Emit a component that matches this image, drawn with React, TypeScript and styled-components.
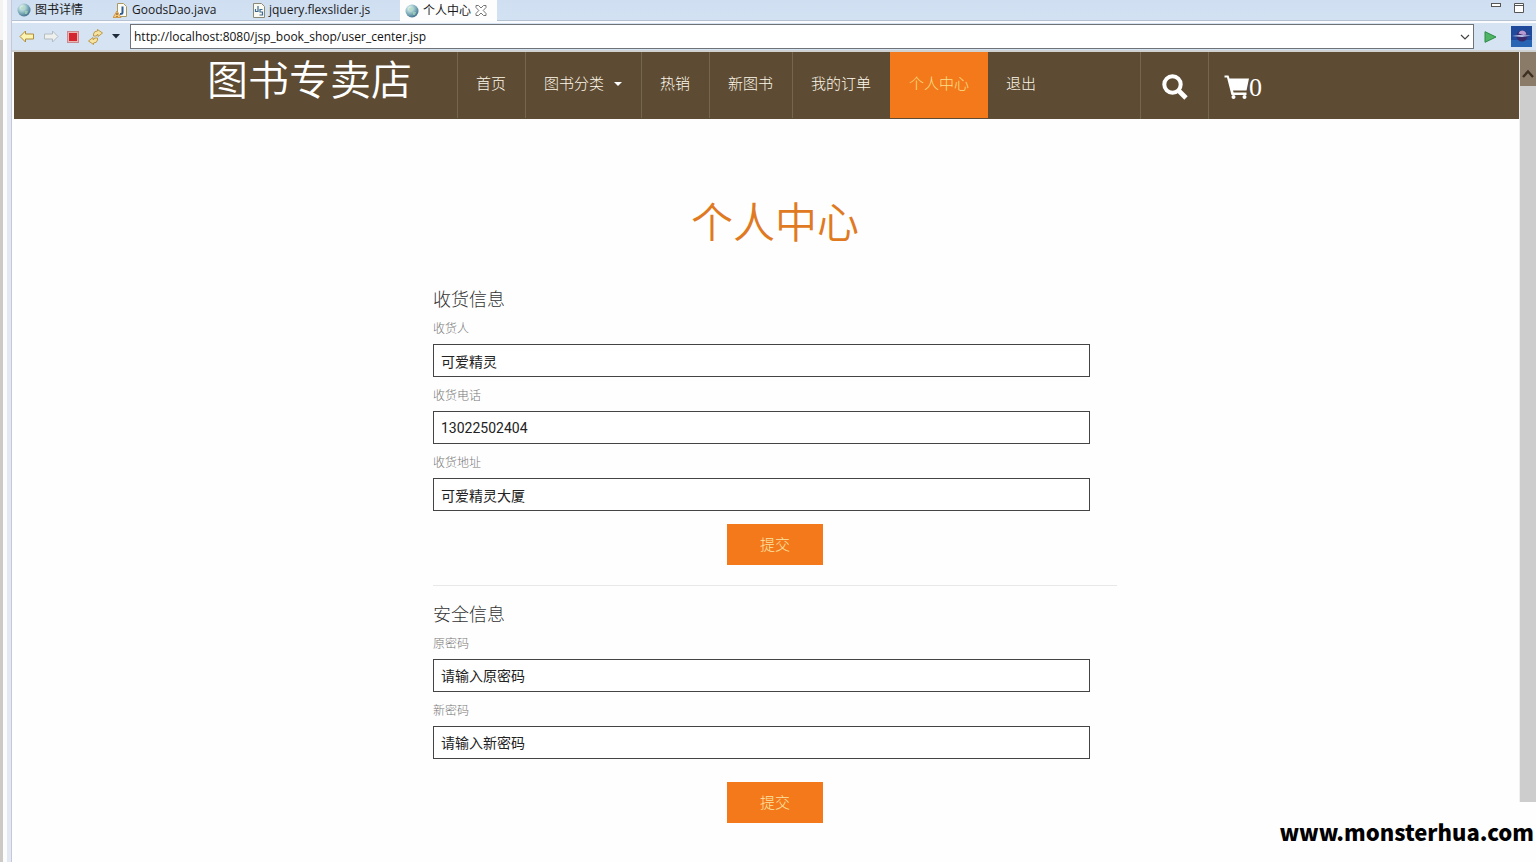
import React from "react";
import styled, { createGlobalStyle } from "styled-components";

const sans = `"Noto Sans", "Noto Sans CJK SC", sans-serif`;
const serif = `"Liberation Serif", "Noto Sans CJK SC", serif`;
const orange = "#f4791b";
const brown = "#5d4b33";

const Global = createGlobalStyle`
  * { box-sizing: border-box; }
  body { margin: 0; background: #fefefe; font-family: ${sans}; color: #111; }
  h1, h2 { margin: 0; font-weight: 300; }
`;

const Shell = styled.div`
  display: flex;
  min-height: 100vh;
`;

const Gutter = styled.div`
  display: flex;
  flex: none;
  width: 12px;
  background: #e3e8f1;
  border-right: 1px solid #c3c9da;
`;

const GutterTrack = styled.div`
  display: flex;
  flex-direction: column;
  width: 7px;
  border-right: 4px solid #fbfcfd;
  background: #cdcac6;

  &::before {
    content: "";
    height: 40px;
    background: #f4f3f2;
  }
`;

const Workbench = styled.div`
  flex: 1;
  min-width: 0;
  display: flex;
  flex-direction: column;
`;

const TabStrip = styled.div`
  display: flex;
  height: 21px;
  background: linear-gradient(#cfdef0, #d3e2f3);
  border-bottom: 1px solid #b4c2d3;
`;

const Tab = styled.button<{ $width: number; $active?: boolean }>`
  display: flex;
  align-items: center;
  gap: 4px;
  width: ${(p) => p.$width}px;
  height: ${(p) => (p.$active ? 21 : 20)}px;
  padding: 0 5px;
  border: 0;
  background: ${(p) => (p.$active ? "#fdfdfe" : "transparent")};
  font: 12px/18px "Open Sans", "Noto Sans CJK SC", sans-serif;
  color: #1a1a1a;
  white-space: nowrap;
  svg { flex: none; }
`;

const WindowButtons = styled.div`
  display: flex;
  gap: 13px;
  margin-left: auto;
  padding: 3px 12px 0 0;
`;

const IconButton = styled.button`
  display: flex;
  padding: 0;
  border: 0;
  background: none;
`;

const Toolbar = styled.form`
  display: flex;
  align-items: center;
  height: 31px;
  padding: 0 4px 0 7px;
  border-top: 2px solid #fafbfc;
  border-bottom: 2px solid #d0d2d2;
  background: #d5e3f3;
`;

const ToolGroup = styled.div`
  display: flex;
  align-items: center;
  gap: 8px;
  width: 111px;
`;

const AddressBox = styled.div`
  display: flex;
  align-items: center;
  flex: 1;
  height: 25px;
  padding-right: 3px;
  border: 1px solid #6f7377;
  background: #fff;
`;

const Address = styled.input`
  flex: 1;
  min-width: 0;
  height: 22px;
  padding: 0 3px;
  border: 0;
  outline: 0;
  background: none;
  font: 12px/18px "Open Sans", sans-serif;
  color: #111;
`;

const ToolEnd = styled.div`
  display: flex;
  align-items: center;
  gap: 14px;
  padding-left: 10px;
`;

const Viewport = styled.div`
  flex: 1;
  display: flex;
  padding-left: 2px;
`;

const Page = styled.div`
  flex: 1;
  min-width: 0;
`;

const Scrollbar = styled.div`
  flex: none;
  width: 17px;
  margin-bottom: 60px;
  background: #cdcdcd;
  border-left: 1px solid #f0f0f0;
`;

const ScrollUp = styled.button`
  display: flex;
  align-items: center;
  justify-content: center;
  width: 100%;
  height: 34px;
  padding: 8px 0 0;
  border: 0;
  background: #8a7b69;
`;

const NavBar = styled.header`
  background: ${brown};
`;

const NavInner = styled.div`
  display: flex;
  height: 67px;
  max-width: 1119px;
  margin: 0 auto;
`;

const Brand = styled.a`
  width: 250px;
  font: 350 41px/58px ${serif};
  color: #fff;
  text-decoration: none;
  white-space: nowrap;
`;

const Menu = styled.nav`
  display: flex;
  flex: 1;
`;

const MenuLink = styled.a<{ $active?: boolean; $plain?: boolean }>`
  display: flex;
  align-items: center;
  gap: 10px;
  height: 66px;
  padding: 0 19px 6px 18px;
  border-left: ${(p) => (p.$plain ? 0 : 1)}px solid ${(p) => (p.$active ? orange : "#76664f")};
  background: ${(p) => (p.$active ? orange : "transparent")};
  color: ${(p) => (p.$active ? "#f8e08c" : "#fdf8ea")};
  font-size: 15px;
  font-weight: 300;
  text-decoration: none;
  white-space: nowrap;
`;

const Caret = styled.span`
  border: 4px solid transparent;
  border-top-color: #fff;
  border-bottom: 0;
  margin-top: 4px;
`;

const NavTool = styled.a<{ $width: number }>`
  display: flex;
  align-items: center;
  width: ${(p) => p.$width}px;
  padding: 4px 0 0 15px;
  border-left: 1px solid #76664f;
  color: #fff;
  font: 26px/30px ${serif};
  text-decoration: none;
`;

const Main = styled.main`
  padding: 75px 0 38px 17px;
`;

const Column = styled.div`
  max-width: 684px;
  margin: 0 auto;
`;

const Title = styled.h1`
  margin-bottom: 34px;
  font: 350 42px/60px ${serif};
  color: #e07a22;
  text-align: center;
`;

const Section = styled.form`
  display: flex;
  flex-direction: column;

  & + & {
    margin-top: 20px;
    padding-top: 17px;
    border-top: 1px solid #e8e8e8;
  }
`;

const SectionTitle = styled.h2`
  margin-bottom: -2px;
  font: 300 18px/24px ${serif};
  color: #333;
`;

const Field = styled.div`
  display: flex;
  flex-direction: column;
  width: 96%;
`;

const Label = styled.label`
  padding-top: 4px;
  font-size: 12px;
  font-weight: 300;
  line-height: 30px;
  color: #777;
`;

const TextInput = styled.input`
  height: 33px;
  padding: 0 7px;
  border: 1px solid #444;
  border-radius: 0;
  background: #fff;
  font: 14px/20px Roboto, "Noto Sans CJK SC", sans-serif;
  color: #222;
  &::placeholder { color: #222; opacity: 1; }
`;

const Submit = styled.button<{ $gap: number }>`
  align-self: center;
  width: 96px;
  height: 41px;
  margin-top: ${(p) => p.$gap}px;
  padding: 0 0 2px;
  border: 0;
  background: ${orange};
  color: #fbe6a6;
  font: 300 15px/20px ${sans};
`;

const Watermark = styled.div`
  position: fixed;
  right: 0;
  bottom: 0;
  height: 60px;
  padding: 0 2px;
  background: #fefefe;
  font: 900 22px/58px "Noto Sans CJK SC", sans-serif;
  color: #000;
`;

const Globe = () => (
  <svg width="14" height="14" viewBox="0 0 14 14">
    <defs>
      <radialGradient id="globe" cx=".35" cy=".3" r=".75">
        <stop offset="0" stopColor="#f2fafa" />
        <stop offset=".5" stopColor="#8fbcc4" />
        <stop offset="1" stopColor="#3f6d8c" />
      </radialGradient>
    </defs>
    <circle cx="7" cy="7" r="6.500" fill="url(#globe)" />
    <path d="M4 4l3-1 1 2-2 2-2-1zM8 8l3 0-1 3-2 0z" fill="#a5d9b4" opacity=".7" />
  </svg>
);

const JavaFile = () => (
  <svg width="15" height="15" viewBox="0 0 15 15">
    <path d="M4.500.5h6l3 3v10h-9z" fill="#fbfbf4" stroke="#a99a63" />
    <path d="M9.500 3.500v6q0 1.500-2.500 1.500" fill="none" stroke="#2d5c94" strokeWidth="2" />
    <path d="M4 8l4 6.500H0z" fill="#f3cb78" stroke="#c98a3c" strokeWidth=".8" />
    <path d="M4 10v2M4 13v1" stroke="#7a3d12" />
  </svg>
);

const ScriptFile = () => (
  <svg width="12" height="15" viewBox="0 0 12 15">
    <path d="M.5.5h8l3 3v11H.5z" fill="#fafaf3" stroke="#8b8a76" />
    <path d="M5 3v5.500H2.500V6M9.500 6.500H7V9h2.500v3H6.500" fill="none" stroke="#3c6a92" strokeWidth="1.200" />
  </svg>
);

const CloseMark = () => (
  <svg width="12" height="11" viewBox="0 0 12 11">
    <path d="M1 .5h2.500L6 3 8.500.5H11v2L8.200 5.500 11 8.500v2H8.500L6 8l-2.500 2.500H1v-2l2.800-3L1 2.500z" fill="#fff" stroke="#666" strokeWidth=".9" />
  </svg>
);

const Arrow = ({ forward }: { forward?: boolean }) => (
  <svg width="16" height="13" viewBox="0 0 16 13">
    <path
      d={forward ? "M15 6.500L9.500 1v3H1.500v5h8v3z" : "M1 6.500L6.500 1v3h8v5h-8v3z"}
      fill={forward ? "#eef0ee" : "#fdf3b0"}
      stroke={forward ? "#b4bcc4" : "#b08e3c"}
    />
  </svg>
);

const Stop = () => (
  <svg width="12" height="12" viewBox="0 0 12 12">
    <rect x=".5" y=".5" width="11" height="11" fill="#e9b6b4" stroke="#c98a90" />
    <rect x="2" y="2" width="8" height="8" fill="#d3262f" />
  </svg>
);

const Refresh = () => (
  <svg width="17" height="16" viewBox="0 0 17 16">
    <path d="M6.500 7V5Q7 2 10.500 2V.5L15.500 4 11 7.500V5.500Q9.500 5.500 9.500 7z" fill="#f7e3a0" stroke="#b8923e" strokeWidth=".9" />
    <path d="M10.500 9v2Q10 14 6.500 14v1.500L1.500 12 6 8.500v2Q7.500 10.500 7.500 9z" fill="#f7e3a0" stroke="#b8923e" strokeWidth=".9" />
  </svg>
);

const Search = () => (
  <svg width="36" height="28" viewBox="0 0 36 28">
    <circle cx="16.500" cy="10.500" r="8.200" fill="none" stroke="#fff" strokeWidth="4" />
    <path d="M22.500 16.500l7.500 7.500" stroke="#fff" strokeWidth="4.800" />
  </svg>
);

const Cart = () => (
  <svg width="25" height="28" viewBox="0 0 25 28">
    <path d="M.5 1.500h4l1 3H25l-2.500 12H9l.6 2H22.500v2.500H7.500L3 3.500H.5z" fill="#fff" />
    <circle cx="9.500" cy="23" r="2" fill="#fff" />
    <circle cx="20.500" cy="23" r="2" fill="#fff" />
  </svg>
);

const shipping = [
  { id: "receiver", label: "收货人", value: "可爱精灵" },
  { id: "phone", label: "收货电话", value: "13022502404" },
  { id: "address", label: "收货地址", value: "可爱精灵大厦" },
];

const passwords = [
  { id: "old-password", label: "原密码", hint: "请输入原密码" },
  { id: "new-password", label: "新密码", hint: "请输入新密码" },
];

export default function App() {
  return (
    <>
      <Global />
      <Shell>
        <Gutter><GutterTrack /></Gutter>
        <Workbench>
          <TabStrip>
            <Tab $width={96}><Globe />图书详情</Tab>
            <Tab $width={140}><JavaFile />GoodsDao.java</Tab>
            <Tab $width={152}><ScriptFile />jquery.flexslider.js</Tab>
            <Tab $width={97} $active><Globe />个人中心<CloseMark /></Tab>
            <WindowButtons>
              <IconButton aria-label="最小化">
                <svg width="10" height="14"><rect x=".5" y=".5" width="9" height="3" fill="#fff" stroke="#555" /></svg>
              </IconButton>
              <IconButton aria-label="最大化">
                <svg width="10" height="14"><path d="M.5.5h9v9h-9zM.5 2.500h9" fill="#fff" stroke="#555" /></svg>
              </IconButton>
            </WindowButtons>
          </TabStrip>
          <Toolbar onSubmit={(e) => e.preventDefault()}>
            <ToolGroup>
              <IconButton type="button" aria-label="后退"><Arrow /></IconButton>
              <IconButton type="button" aria-label="前进"><Arrow forward /></IconButton>
              <IconButton type="button" aria-label="停止"><Stop /></IconButton>
              <IconButton type="button" aria-label="刷新"><Refresh /></IconButton>
              <IconButton type="button" aria-label="更多">
                <svg width="8" height="5"><path d="M0 0h8L4 4.500z" fill="#1c2a3a" /></svg>
              </IconButton>
            </ToolGroup>
            <AddressBox>
              <Address aria-label="地址" defaultValue="http://localhost:8080/jsp_book_shop/user_center.jsp" />
              <IconButton type="button" aria-label="历史地址">
                <svg width="10" height="6"><path d="M1 1l4 4 4-4" fill="none" stroke="#444" strokeWidth="1.200" /></svg>
              </IconButton>
            </AddressBox>
            <ToolEnd>
              <IconButton aria-label="转到">
                <svg width="13" height="12"><path d="M1 .7L12 6 1 11.300z" fill="#4fb565" stroke="#2b8a46" /></svg>
              </IconButton>
              <IconButton type="button" aria-label="浏览器">
                <svg width="21" height="21">
                  <rect width="21" height="21" fill="#1f4a9c" />
                  <rect y="14" width="21" height="7" fill="#2864b4" />
                  <circle cx="11" cy="10" r="5.500" fill="#3a2a6c" />
                  <path d="M7.500 7.500q1-3 4-3 3.500.5 4 4l-3 .5z" fill="#b79ad0" />
                  <path d="M1 10l7-1 12 .5-9 1.500z" fill="#b6c6ee" />
                </svg>
              </IconButton>
            </ToolEnd>
          </Toolbar>
          <Viewport>
            <Page>
              <NavBar>
                <NavInner>
                  <Brand href="#">图书专卖店</Brand>
                  <Menu>
                    <MenuLink href="#">首页</MenuLink>
                    <MenuLink href="#">图书分类<Caret /></MenuLink>
                    <MenuLink href="#">热销</MenuLink>
                    <MenuLink href="#">新图书</MenuLink>
                    <MenuLink href="#">我的订单</MenuLink>
                    <MenuLink href="#" $active>个人中心</MenuLink>
                    <MenuLink href="#" $plain>退出</MenuLink>
                  </Menu>
                  <NavTool href="#" aria-label="搜索" $width={68}><Search /></NavTool>
                  <NavTool href="#" aria-label="购物车" $width={118}><Cart />0</NavTool>
                </NavInner>
              </NavBar>
              <Main>
                <Column>
                  <Title>个人中心</Title>
                  <Section onSubmit={(e) => e.preventDefault()}>
                    <SectionTitle>收货信息</SectionTitle>
                    {shipping.map((f) => (
                      <Field key={f.id}>
                        <Label htmlFor={f.id}>{f.label}</Label>
                        <TextInput id={f.id} defaultValue={f.value} />
                      </Field>
                    ))}
                    <Submit $gap={13}>提交</Submit>
                  </Section>
                  <Section onSubmit={(e) => e.preventDefault()}>
                    <SectionTitle>安全信息</SectionTitle>
                    {passwords.map((f) => (
                      <Field key={f.id}>
                        <Label htmlFor={f.id}>{f.label}</Label>
                        <TextInput id={f.id} type="password" placeholder={f.hint} />
                      </Field>
                    ))}
                    <Submit $gap={23}>提交</Submit>
                  </Section>
                </Column>
              </Main>
            </Page>
            <Scrollbar>
              <ScrollUp aria-label="向上滚动">
                <svg width="12" height="9"><path d="M1 8l5-5.500L11 8" fill="none" stroke="#3d3020" strokeWidth="2.400" /></svg>
              </ScrollUp>
            </Scrollbar>
          </Viewport>
        </Workbench>
      </Shell>
      <Watermark>www.monsterhua.com</Watermark>
    </>
  );
}
